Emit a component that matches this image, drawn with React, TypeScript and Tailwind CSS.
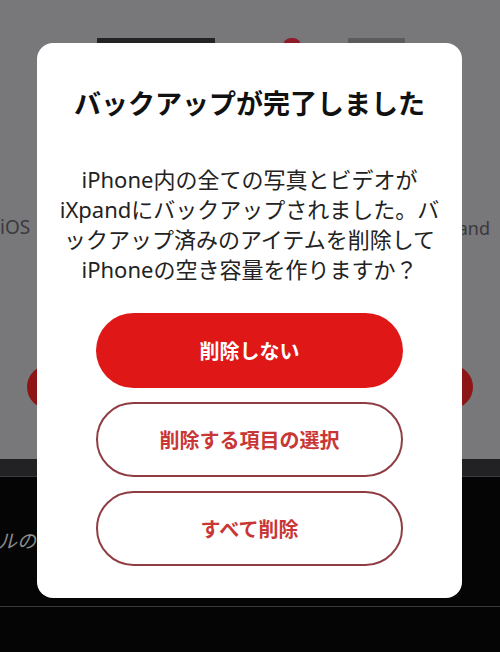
import React from 'react';

const App: React.FC = () => {
  return (
    <div
      className="relative w-[500px] h-[652px] overflow-hidden bg-[#050505]"
      style={{ fontFamily: '"Noto Sans", "Noto Sans CJK JP", sans-serif' }}
    >
      {/* page behind the dimmed overlay */}
      <div className="h-[459px] bg-[#78777a] flex flex-col">
        <div className="mt-[38px] flex items-start h-[8px]">
          <div className="ml-[97px] w-[118px] h-[8px] bg-[#232225]"></div>
          <div className="ml-[68px] w-[18px] h-[8px] rounded-t-full bg-[#8e1c2a]"></div>
          <div className="ml-[47px] w-[57px] h-[8px] bg-[#5c5b5e]"></div>
        </div>
        <div className="mt-[172px] flex justify-between items-center text-[19px] text-[#3a393c] leading-none">
          <span className="ml-0">iOS</span>
          <span className="mr-[10px] text-[18px]">pand</span>
        </div>
        <div className="mt-[128px] flex justify-center">
          <div className="w-[446px] h-[44px] rounded-full bg-[#8d1515]"></div>
        </div>
      </div>
      <div className="h-[18px] bg-[#222123] border-b border-[#3c3c3c]"></div>
      <div className="h-[129px] flex items-center">
        <span className="-ml-[2px] text-[19px] italic text-[#8e8e8e]">ルの</span>
      </div>
      <div className="h-px bg-[#3a3a3a]"></div>

      {/* dialog */}
      <div className="absolute left-[37px] top-[43px] w-[425px] h-[555px] bg-white rounded-[16px] flex flex-col items-center pt-[42px]">
        <h2
          className="text-[27px] leading-[36px] font-bold text-[#111] whitespace-nowrap"
          style={{ fontFamily: '"Noto Sans CJK JP", sans-serif' }}
        >
          バックアップが完了しました
        </h2>
        <p className="mt-[43px] text-[22px] leading-[30px] text-[#222] text-center whitespace-nowrap">
          iPhone内の全ての写真とビデオが
          <br />
          iXpandにバックアップされました。バ
          <br />
          ックアップ済みのアイテムを削除して
          <br />
          iPhoneの空き容量を作りますか？
        </p>
        <div
          className="mt-[29px] flex flex-col gap-[14px] w-[307px]"
          style={{ fontFamily: '"Noto Sans CJK JP", sans-serif' }}
        >
          <button className="h-[75px] rounded-full bg-[#e01717] text-white text-[20px] font-bold">
            削除しない
          </button>
          <button className="h-[75px] rounded-full border-2 border-[#8f3d42] bg-white text-[#c83636] text-[20px] font-bold">
            削除する項目の選択
          </button>
          <button className="h-[75px] rounded-full border-2 border-[#8f3d42] bg-white text-[#c83636] text-[20px] font-bold">
            すべて削除
          </button>
        </div>
      </div>
    </div>
  );
};

export default App;
